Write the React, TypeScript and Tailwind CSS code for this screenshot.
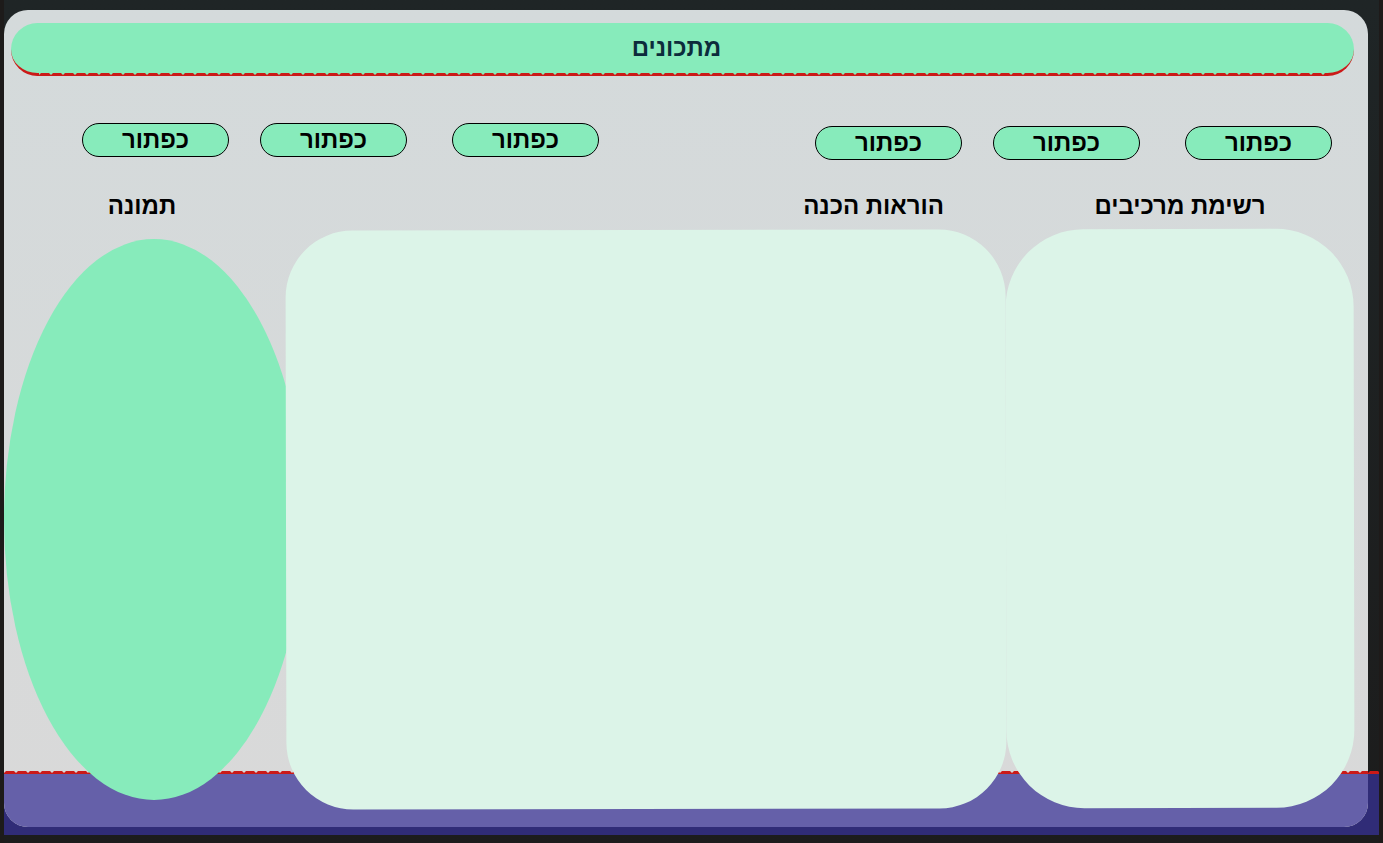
import { useId } from 'react';

const buttonLabel = 'כפתור';

function RecipeButton() {
  return (
    <button
      type="button"
      className="flex h-[34px] w-[147px] items-center justify-center rounded-full border border-black bg-[#87ebbb] text-2xl leading-8 font-semibold text-black"
    >
      {buttonLabel}
    </button>
  );
}

function ButtonGroup() {
  return (
    <div className="flex">
      <RecipeButton />
      <div className="ml-[31px] mr-[45px]">
        <RecipeButton />
      </div>
      <RecipeButton />
    </div>
  );
}

/* Red stitched line: each 12px segment has bevelled upper corners. */
function StitchedLine({ className }: { className: string }) {
  const id = useId();
  return (
    <svg className={className} aria-hidden="true">
      <defs>
        <pattern id={id} width="12" height="3" patternUnits="userSpaceOnUse">
          <path d="M0 3V2L2 0H10L12 2V3Z" fill="#cb1a18" />
        </pattern>
      </defs>
      <rect width="100%" height="3" fill={`url(#${id})`} />
    </svg>
  );
}

export default function App() {
  return (
    <div
      lang="he"
      className="relative flex min-h-screen flex-col bg-linear-to-b from-[#1f2526] to-[#1c1c1c] pt-2.5 pr-[15px] pb-4 pl-1 font-['Liberation_Sans',Arial,sans-serif]"
    >
      <div className="absolute inset-y-0 left-0 w-1 bg-[#1d1b1a]" />
      <div className="absolute inset-y-0 right-0 w-1 bg-[#1e1a19]" />
      <div className="absolute right-1 bottom-2 left-1 h-[61px] bg-[#302c77]" />

      <main className="relative flex flex-1 flex-col overflow-hidden rounded-3xl bg-linear-to-b from-[#d4dadb] to-[#d9d9d9] pt-[13px] pb-[19px]">
        <div className="absolute inset-x-0 bottom-0 h-[53px] bg-[#6560a9]" />
        <StitchedLine className="absolute inset-x-0 bottom-[53px] h-[3px] w-full" />

        <header className="relative mr-3.5 ml-[7px] flex h-[53px] items-center justify-center rounded-[27px] border-b-[3px] border-[#cb1a18] bg-[#87ebbb] pr-3">
          <div className="absolute inset-x-7 -bottom-[3px] h-[3px] bg-[#87ebbb]">
            <StitchedLine className="h-[3px] w-full" />
          </div>
          <h1 className="text-2xl leading-8 font-semibold text-[#0c2b3c]">מתכונים</h1>
        </header>

        <nav className="relative mt-[47px] mr-9 ml-[78px] flex justify-between">
          <ButtonGroup />
          <div className="mt-[3px]">
            <ButtonGroup />
          </div>
        </nav>

        <div className="relative mt-[30px] mr-3.5 grid grid-cols-[282fr_720fr_348fr] text-2xl leading-8 font-semibold text-black">
          <h2 className="pr-1.5 text-center">תמונה</h2>
          <h2 className="pr-[62px] text-right">הוראות הכנה</h2>
          <h2 className="text-center">רשימת מרכיבים</h2>
        </div>

        <div className="relative mr-3.5 mt-[7px] grid flex-1 grid-cols-[282fr_720fr_348fr]">
          <section aria-label="תמונה" className="-mr-[18px] mt-2.5 mb-2 rounded-[50%] bg-[#87ebbb]" />
          <section aria-label="הוראות הכנה" className="relative mt-px -mb-px rotate-[-0.1deg] rounded-[67px] bg-[#dcf4e8]" />
          <section aria-label="רשימת מרכיבים" className="relative rotate-[-0.1deg] rounded-[78px] bg-[#dcf4e8]" />
        </div>
      </main>

      <StitchedLine className="absolute right-1 bottom-[69px] h-[3px] w-[11px]" />
    </div>
  );
}
